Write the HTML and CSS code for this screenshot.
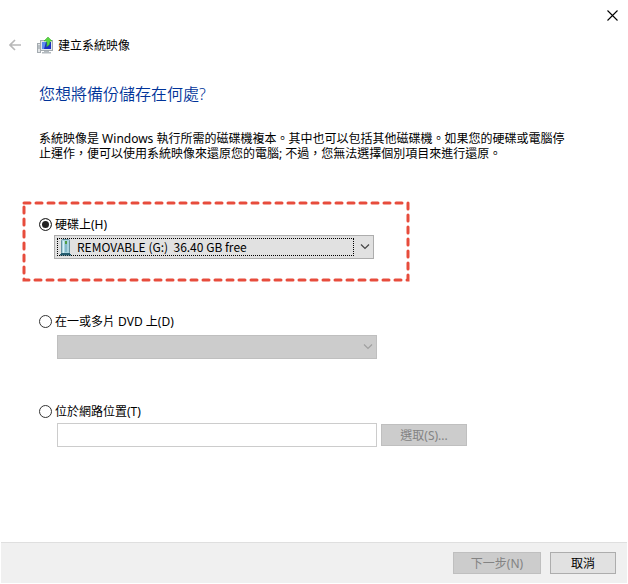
FILE: index.html
```html
<!DOCTYPE html>
<html lang="zh-Hant">
<head>
    <meta charset="UTF-8">
    <meta name="viewport" content="width=device-width, initial-scale=1.0">
    <title>建立系統映像</title>
    <link rel="stylesheet" href="styles.css">
</head>
<body>
    <div class="titlebar">
        <button type="button" class="close" aria-label="關閉">
            <svg width="11" height="11" viewBox="0 0 11 11"><path d="M0.5 0.5L10.5 10.5M10.5 0.5L0.5 10.5" stroke="#000" stroke-width="1.1"/></svg>
        </button>
    </div>

    <header class="header">
        <button type="button" class="back" aria-label="上一步" disabled>
            <svg width="13" height="12" viewBox="0 0 13 12"><path d="M12 6H1M6 1L1 6L6 11" fill="none" stroke="#b8b8b8" stroke-width="1.6"/></svg>
        </button>
        <svg class="app-icon" width="17" height="17" viewBox="0 0 17 17">
            <rect x="0.5" y="6.5" width="3" height="9" fill="#e2e5e7" stroke="#a4abb0"/>
            <path d="M1 9h2M1 11h2" stroke="#8d979e"/>
            <rect x="3.5" y="3.5" width="12" height="10" fill="#e4e7e9" stroke="#a4abb0"/>
            <rect x="5" y="5" width="9" height="7" fill="#1a2fc4"/>
            <path d="M5 5h4l-2 7H5z" fill="#5f8cf0"/>
            <path d="M7 14h5v1h2v1.500H5V15h2z" fill="#b3babf"/>
            <path d="M11 0L15 4H13C13 7 12 9 9.500 9.500C10.300 8 10 6 9.500 4H7z" fill="#5ad640" stroke="#35a82b" stroke-width="0.500"/>
        </svg>
        <span>建立系統映像</span>
    </header>

    <main class="content">
        <h1>您想將備份儲存在何處?</h1>
        <p class="intro">系統映像是 Windows 執行所需的磁碟機複本。其中也可以包括其他磁碟機。如果您的硬碟或電腦停止運作，便可以使用系統映像來還原您的電腦; 不過，您無法選擇個別項目來進行還原。</p>

        <section class="option highlight">
            <svg class="dashes">
                <rect width="100%" height="100%"/>
            </svg>
            <div class="choice">
                <input type="radio" name="target" id="disk" checked>
                <label for="disk">硬碟上(H)</label>
            </div>
            <div class="combo">
                <svg class="drive" width="11" height="17" viewBox="0 0 11 17">
                    <rect x="1.500" y="0.500" width="8" height="14" rx="1" fill="#a9d3df" stroke="#66919f"/>
                    <path d="M3.500 2v12" stroke="#d9f1f7"/>
                    <path d="M5 5h2v8H5z" fill="#83b9c9"/>
                    <path d="M5 2h2v3H5z" fill="#4f9c45"/>
                    <path d="M1 14h9v1h1v1.500H0V15h1z" fill="#245d70"/>
                </svg>
                <select class="focused" aria-label="硬碟上">
                    <option>REMOVABLE (G:)&nbsp; 36.40 GB free</option>
                </select>
                <svg class="arrow" width="10" height="6" viewBox="0 0 10 6"><path d="M1 0.500L5 4.500L9 0.500"/></svg>
            </div>
        </section>

        <section class="option">
            <div class="choice">
                <input type="radio" name="target" id="dvd">
                <label for="dvd">在一或多片 DVD 上(D)</label>
            </div>
            <div class="combo disabled">
                <select aria-label="在一或多片 DVD 上" disabled></select>
                <svg class="arrow" width="10" height="6" viewBox="0 0 10 6"><path d="M1 0.500L5 4.500L9 0.500"/></svg>
            </div>
        </section>

        <section class="option">
            <div class="choice">
                <input type="radio" name="target" id="network">
                <label for="network">位於網路位置(T)</label>
            </div>
            <div class="path">
                <input type="text" aria-label="網路位置">
                <button type="button" class="btn browse" disabled>選取(S)...</button>
            </div>
        </section>
    </main>

    <footer class="footer">
        <button type="button" class="btn next" disabled>下一步(N)</button>
        <button type="button" class="btn cancel">取消</button>
    </footer>
</body>
</html>
```

FILE: styles.css
```css
* {
    box-sizing: border-box;
}

body {
    display: flex;
    flex-direction: column;
    min-height: 100vh;
    margin: 0;
    padding: 0 1px 1px;
    background-color: #fff;
    color: #000;
    font-family: "Noto Sans", "Noto Sans CJK TC", sans-serif;
    font-size: 12px;
    line-height: 15px;
}

button, input, select {
    margin: 0;
    font: inherit;
    color: inherit;
}

.titlebar {
    display: flex;
    justify-content: flex-end;
    height: 30px;
}

.close, .back {
    display: flex;
    align-items: center;
    justify-content: center;
    padding: 0;
    border: none;
    background: none;
}

.close {
    width: 30px;
}

.header {
    display: flex;
    align-items: center;
    height: 30px;
    padding-left: 7px;
}

.back {
    width: 14px;
    margin-right: 15px;
}

.app-icon {
    margin-right: 4px;
}

.content {
    flex: 1;
    padding: 22px 56px 0 38px;
}

h1 {
    margin: 0 0 25px;
    color: #003399;
    font-size: 16px;
    font-weight: 350;
    line-height: 24px;
}

.intro {
    margin: 0 0 55px;
}

.choice {
    display: flex;
    align-items: center;
    gap: 3px;
    height: 16px;
}

.choice input {
    appearance: none;
    width: 13px;
    height: 13px;
    border: 1px solid #333;
    border-radius: 50%;
    background-color: #fff;
}

.choice input:checked {
    background-color: #222;
    box-shadow: inset 0 0 0 2px #fff;
}

.option {
    position: relative;
    margin-bottom: 44px;
}

.highlight {
    margin-bottom: 54px;
}

.dashes {
    position: absolute;
    top: -13px;
    left: -15px;
    width: 384px;
    height: 77px;
    overflow: visible;
}

.dashes rect {
    fill: none;
    stroke: #e74c3c;
    stroke-width: 3;
    stroke-linecap: round;
    stroke-dasharray: 6 6;
}

.combo {
    position: relative;
    display: flex;
    align-items: center;
    width: 320px;
    height: 24px;
    margin: 6px 0 0 18px;
    padding: 2px;
    border: 1px solid #adadad;
    background-color: #e1e1e1;
}

.highlight .combo {
    margin: 3px 0 0 15px;
}

.combo select {
    flex: 1;
    appearance: none;
    height: 18px;
    padding: 0 0 0 19px;
    border: none;
    outline: none;
    background: none;
    font-family: "Noto Sans CJK TC", sans-serif;
    line-height: 16px;
}

.combo .focused {
    border: 1px dotted #000;
}

.drive {
    position: absolute;
    left: 5px;
}

.arrow {
    margin: 0 1px 0 6px;
    fill: none;
    stroke: #444;
    stroke-width: 1.2;
}

.disabled {
    background-color: #ccc;
    border-color: #bfbfbf;
}

.disabled .arrow {
    stroke: #a0a0a0;
}

.path {
    display: flex;
    align-items: center;
    gap: 4px;
    margin: 4px 0 0 18px;
}

.path input {
    width: 320px;
    height: 24px;
    padding: 0 4px;
    border: 1px solid #ccc;
}

.btn {
    height: 22px;
    padding: 0;
    border: 1px solid #adadad;
    background-color: #e1e1e1;
}

.btn:disabled {
    border-color: #bfbfbf;
    background-color: #ccc;
    color: #838383;
}

.browse {
    width: 86px;
}

.next {
    width: 88px;
}

.cancel {
    width: 66px;
}

.footer {
    display: flex;
    align-items: center;
    justify-content: flex-end;
    gap: 9px;
    height: 41px;
    padding-right: 11px;
    border-top: 1px solid #dfdfdf;
    background-color: #f0f0f0;
}
```
